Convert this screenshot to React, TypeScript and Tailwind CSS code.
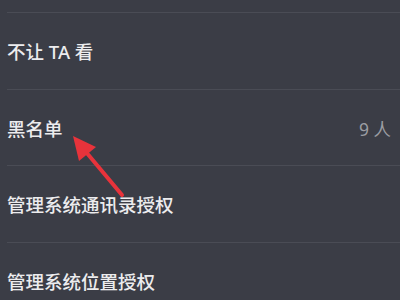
const rows = [
  { label: "不让 TA 看" },
  { label: "黑名单", value: "9 人" },
  { label: "管理系统通讯录授权" },
  { label: "管理系统位置授权" },
];

export default function App() {
  return (
    <div
      className="relative h-[300px] w-[400px] overflow-hidden bg-[#3b3d46]"
      style={{ fontFamily: '"Noto Sans", "Noto Sans CJK SC", sans-serif' }}
    >
      <div className="h-[12px]" />
      {rows.map((r) => (
        <div key={r.label} className="ml-[7px] flex h-[76.5px] items-center justify-between border-t border-[#4a4c55] pt-[3px] pr-[9px]">
          <span className="text-[18.5px] font-medium text-[#ececee]">{r.label}</span>
          {r.value && <span className="text-[17.5px] text-[#9c9da3]">{r.value}</span>}
        </div>
      ))}

      {/* red annotation arrow */}
      <svg className="pointer-events-none absolute left-0 top-0" width="400" height="300" viewBox="0 0 400 300">
        <line x1="86" y1="152" x2="122" y2="195" stroke="#e8333b" strokeWidth="4" strokeLinecap="round" />
        <polygon points="73,136 96,147 79,161" fill="#e8333b" />
      </svg>
    </div>
  );
}
